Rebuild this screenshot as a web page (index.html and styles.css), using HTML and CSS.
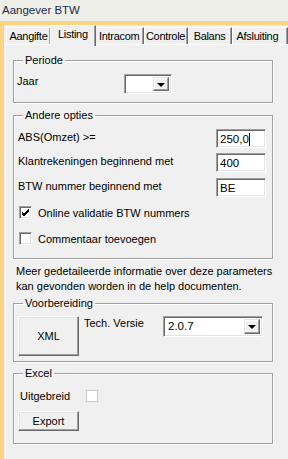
FILE: index.html
```html
<!DOCTYPE html>
<html>
<head>
	<meta charset="utf-8">
	<title>Aangever BTW</title>
	<link rel="stylesheet" href="styles.css">
</head>
<body>
	<div class="titlebar">Aangever BTW</div>
	<div class="frame">
		<div class="tabs">
			<div class="tab w1">Aangifte</div>
			<div class="tab sel w2">Listing</div>
			<div class="tab w3">Intracom</div>
			<div class="tab w4">Controle</div>
			<div class="tab w5">Balans</div>
			<div class="tab w6">Afsluiting</div>
		</div>
		<div class="page">
			<fieldset class="group g-periode">
				<legend>Periode</legend>
				<div class="row-jaar">
					<span class="lbl">Jaar</span>
					<div class="combo c-jaar">
						<div class="val"></div>
						<div class="drop"><span class="arrow"></span></div>
					</div>
				</div>
			</fieldset>

			<fieldset class="group g-opties">
				<legend>Andere opties</legend>
				<div class="field r1">
					<span class="lbl">ABS(Omzet) &gt;=</span>
					<div class="input">250,0<span class="caret"></span></div>
				</div>
				<div class="field r2">
					<span class="lbl">Klantrekeningen beginnend met</span>
					<div class="input">400</div>
				</div>
				<div class="field r3">
					<span class="lbl">BTW nummer beginnend met</span>
					<div class="input">BE</div>
				</div>
				<div class="check c1">
					<span class="box">
						<svg width="9" height="9" viewBox="0 0 9 9"><path d="M1 4 L3 6 L8 1 M1 5 L3 7 L8 2 M1 6 L3 8 L8 3" stroke="#000" stroke-width="1" fill="none"/></svg>
					</span>
					<span>Online validatie BTW nummers</span>
				</div>
				<div class="check c2">
					<span class="box"></span>
					<span>Commentaar toevoegen</span>
				</div>
			</fieldset>

			<p class="info">Meer gedetaileerde informatie over deze parameters<br>kan gevonden worden in de help documenten.</p>

			<fieldset class="group g-voorb">
				<legend>Voorbereiding</legend>
				<div class="voorb-row">
					<div class="btn btn-xml">XML</div>
					<span class="lbl tech">Tech. Versie</span>
					<div class="combo c-versie">
						<div class="val">2.0.7</div>
						<div class="drop"><span class="arrow"></span></div>
					</div>
				</div>
			</fieldset>

			<fieldset class="group g-excel">
				<legend>Excel</legend>
				<div class="uitg">
					<span class="lbl">Uitgebreid</span>
					<span class="flatbox"></span>
				</div>
				<div class="btn btn-export">Export</div>
			</fieldset>
		</div>
	</div>
</body>
</html>
```

FILE: styles.css
```css
*{margin:0;padding:0;box-sizing:border-box;}
body{
	width:288px;
	height:459px;
	overflow:hidden;
	background-color:#fdd384;
	font-family:"Liberation Sans",Arial,sans-serif;
	font-size:11px;
	color:#000;
}
.titlebar{
	height:21px;
	line-height:21px;
	padding-left:2px;
	background-color:#efefea;
	color:#1c2a48;
	font-size:11.5px;
}
.frame{
	margin-top:4px;
	margin-left:4px;
	height:434px;
	background-color:#f0f0f0;
	padding-left:1px;
}

/* tabs */
.tabs{
	display:flex;
	height:19px;
	padding-left:1px;
	align-items:flex-end;
}
.tab{
	height:17px;
	line-height:16px;
	text-align:center;
	letter-spacing:-0.3px;
	border-top:1px solid #fff;
	border-left:1px solid #fff;
	border-right:1px solid #696969;
	box-shadow:inset -1px 0 #a0a0a0;
	white-space:nowrap;
	overflow:hidden;
}
.tab.sel{
	height:21px;
	margin:0 -1px -2px -1px;
	position:relative;
	background-color:#f0f0f0;
	line-height:17px;
	z-index:1;
}
.w1{width:48px;}
.w2{width:49px;}
.w3{width:52px;}
.w4{width:47px;}
.w5{width:47px;}
.w6{width:60px;text-align:left;padding-left:4px;}

.page{
	border-top:1px solid #fff;
	border-left:1px solid #fff;
	padding-left:7px;
	height:415px;
}

/* group boxes */
.group{
	width:260px;
	border:1px solid #a0a0a0;
	box-shadow:inset 1px 1px #fff, 1px 1px #fff;
	padding:0 3px;
}
.group legend{
	margin-left:6px;
	padding:0 2px;
	line-height:13px;
}
.g-periode{margin-top:9px;height:49px;}
.g-opties{margin-top:6px;height:150px;}
.g-voorb{margin-top:3px;height:65px;}
.g-excel{margin-top:5px;height:77px;}

.lbl{white-space:nowrap;}

.row-jaar{
	display:flex;
	margin-top:7px;
}
.row-jaar .lbl{width:107px;padding-top:1px;}

/* sunken boxes */
.combo,.input{
	background-color:#fff;
	border:1px solid;
	border-color:#a0a0a0 #fff #fff #a0a0a0;
	box-shadow:inset 1px 1px #696969, inset -1px -1px #e3e3e3;
}
.combo{
	display:flex;
	padding:2px;
}
.combo .val{flex:1;line-height:15px;padding-left:2px;font-size:11.5px;}
.drop{
	width:16px;
	background-color:#f0f0f0;
	border:1px solid;
	border-color:#e3e3e3 #696969 #696969 #e3e3e3;
	box-shadow:inset -1px -1px #a0a0a0, inset 1px 1px #fff;
	display:flex;
	align-items:center;
	justify-content:center;
}
.arrow{
	width:0;height:0;
	border-left:4px solid transparent;
	border-right:4px solid transparent;
	border-top:4px solid #000;
	margin-top:1px;
}
.c-jaar{width:48px;height:20px;}
.c-versie{width:100px;height:21px;}

.field{
	display:flex;
	justify-content:space-between;
	height:19px;
	padding-left:1px;
	width:249px;
}
.field .lbl{margin-top:2px;}
.r1{margin-top:7px;}
.r2{margin-top:5px;}
.r3{margin-top:6px;}
.input{
	width:50px;
	height:19px;
	padding:3px 0 0 3px;
	font-size:11.5px;
	line-height:13px;
}
.caret{
	display:inline-block;
	width:1px;
	height:13px;
	background-color:#000;
	vertical-align:top;
}

.check{
	display:flex;
	align-items:center;
	gap:6px;
	height:13px;
	padding-left:2px;
}
.c1{margin-top:9px;}
.c2{margin-top:13px;}
.box{
	width:13px;height:13px;
	background-color:#fff;
	border:1px solid;
	border-color:#a0a0a0 #fff #fff #a0a0a0;
	box-shadow:inset 1px 1px #696969, inset -1px -1px #e3e3e3;
	display:flex;
	align-items:center;
	justify-content:center;
}
.box svg{display:block;}

.info{
	margin:5px 0 0 3px;
	line-height:15px;
}

/* buttons */
.btn{
	background-color:#f0f0f0;
	border:1px solid;
	border-color:#fff #696969 #696969 #fff;
	box-shadow:inset -1px -1px #a0a0a0, inset 1px 1px #e3e3e3;
	text-align:center;
}
.voorb-row{
	display:flex;
	margin-top:6px;
	padding-left:1px;
}
.btn-xml{width:61px;height:40px;line-height:38px;}
.tech{margin:1px 0 0 5px;width:79px;}

.uitg{
	display:flex;
	align-items:center;
	margin-top:10px;
	padding-left:3px;
}
.uitg .lbl{width:66px;}
.flatbox{
	width:12px;height:12px;
	background-color:#fff;
	border:1px solid #c8c8c8;
}
.btn-export{
	width:61px;
	height:20px;
	line-height:18px;
	margin:9px 0 0 1px;
}
```
